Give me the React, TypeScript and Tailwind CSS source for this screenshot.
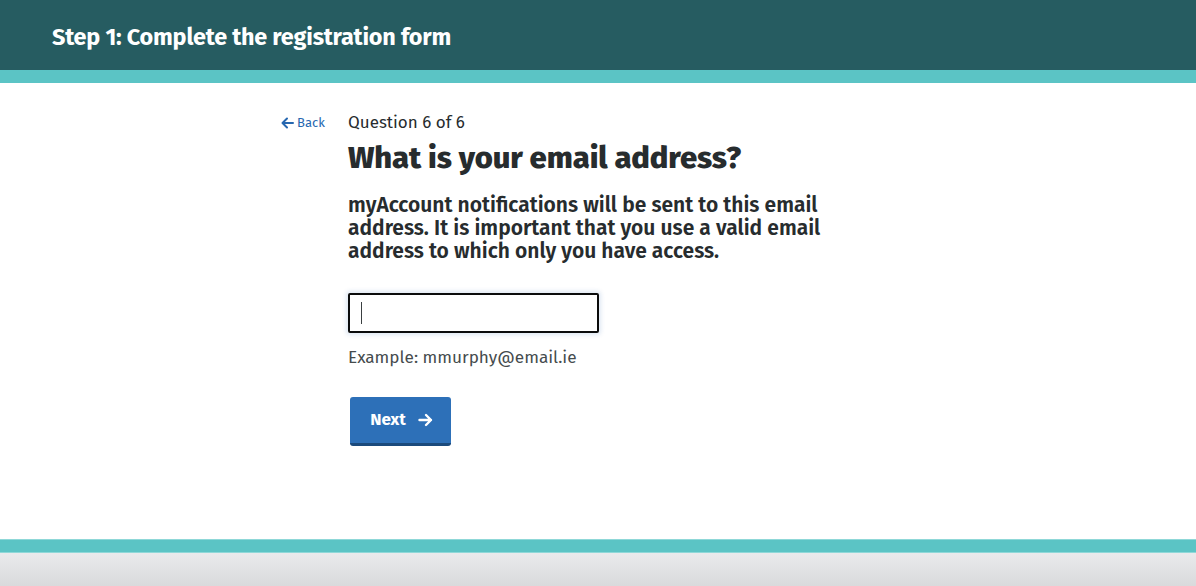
import React from "react";

const font = { fontFamily: '"Fira Sans", "Noto Sans", "Open Sans", sans-serif' };

export default function App() {
  return (
    <div className="flex h-[586px] w-full flex-col bg-white text-[#272c2e]" style={font}>
      <header className="flex h-[70px] shrink-0 items-center bg-[#265c61] pl-[52px] pt-[6px]">
        <h1 className="text-[23.4px] font-bold tracking-[-0.2px] text-white">Step 1: Complete the registration form</h1>
      </header>
      <div className="h-[13px] shrink-0 bg-[#5bc4c5]" />
      <main className="flex flex-1 justify-center pt-[28px]">
        <div className="flex w-[634px]">
          <div className="w-[67px] shrink-0 pt-[2px]">
            <a href="#" className="flex items-center gap-[3px] text-[13px] text-[#2667b0]">
              <svg width="13" height="12" viewBox="0 0 13 12" fill="none" stroke="currentColor" strokeWidth="2" strokeLinecap="round" strokeLinejoin="round">
                <path d="M12 6H2M6 1.5L1.5 6L6 10.5" />
              </svg>
              Back
            </a>
          </div>
          <div className="w-[500px] shrink-0">
            <p className="text-[17px] leading-[24px] text-[#272c2e]">Question 6 of 6</p>
            <h2 className="mt-[5px] text-[31px] font-extrabold leading-[36px] tracking-[-0.1px] text-[#272c2e]">What is your email address?</h2>
            <p className="mt-[18px] w-[490px] text-[21px] font-semibold leading-[23px] text-[#272c2e]">
              myAccount notifications will be sent to this email address. It is important that you use a valid email address to which only you have access.
            </p>
            <div className="relative mt-[30px] w-[251px]">
              <input
                type="email"
                className="block h-[40px] w-[251px] rounded-[2px] border-2 border-[#0b0c0c] px-[12px] text-[16px] shadow-[0_0_4px_2px_rgba(38,103,176,0.15)] outline-none"
              />
              <span className="pointer-events-none absolute left-[13px] top-[9px] h-[22px] w-px bg-[#3a3f41]" />
            </div>
            <p className="mt-[13px] text-[17.2px] leading-[24px] text-[#454b4d]">Example: mmurphy@email.ie</p>
            <button className="ml-[2px] mt-[27px] flex h-[49px] w-[101px] items-center justify-center gap-[12px] rounded-[3px] border-b-[3px] border-[#1b4a7c] bg-[#2d70b8] pl-[2px] text-[17px] font-bold text-white">
              Next
              <svg width="15" height="14" viewBox="0 0 15 14" fill="none" stroke="currentColor" strokeWidth="2.4" strokeLinecap="round" strokeLinejoin="round">
                <path d="M1.5 7H13M8 2L13 7L8 12" />
              </svg>
            </button>
          </div>
          <div className="w-[67px] shrink-0" />
        </div>
      </main>
      <div className="h-[14px] shrink-0 border-y border-[#8fd8d8] bg-[#5bc4c5]" />
      <footer className="h-[33px] shrink-0 bg-gradient-to-b from-[#e9eaec] to-[#d9dadc]" />
    </div>
  );
}
